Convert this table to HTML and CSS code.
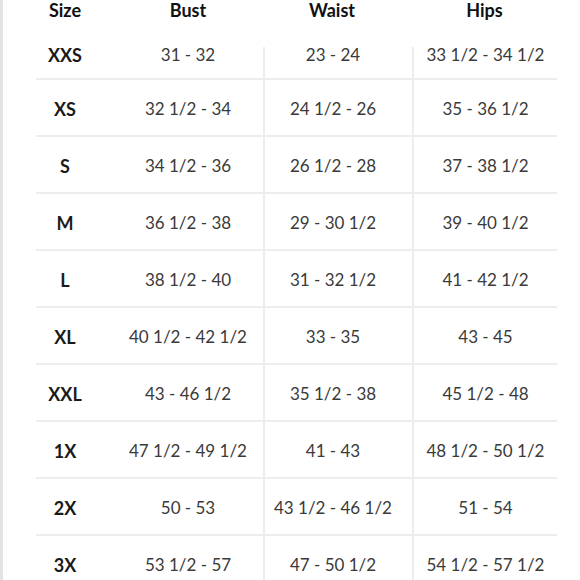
FILE: index.html
```html
<!DOCTYPE html>
<html lang="en">
<head>
<meta charset="utf-8">
<title>Size chart</title>
<link rel="stylesheet" href="styles.css">
</head>
<body>
<div class="chart">
  <div class="row head">
    <div class="cell c-size">Size</div>
    <div class="cell c-bust">Bust</div>
    <div class="cell c-waist">Waist</div>
    <div class="cell c-hips">Hips</div>
  </div>
  <div class="row data first">
    <div class="cell c-size">XXS</div>
    <div class="cell c-bust">31 - 32</div>
    <div class="cell c-waist">23 - 24</div>
    <div class="cell c-hips">33 1/2 - 34 1/2</div>
  </div>
  <div class="row data">
    <div class="cell c-size">XS</div>
    <div class="cell c-bust">32 1/2 - 34</div>
    <div class="cell c-waist">24 1/2 - 26</div>
    <div class="cell c-hips">35 - 36 1/2</div>
  </div>
  <div class="row data">
    <div class="cell c-size">S</div>
    <div class="cell c-bust">34 1/2 - 36</div>
    <div class="cell c-waist">26 1/2 - 28</div>
    <div class="cell c-hips">37 - 38 1/2</div>
  </div>
  <div class="row data">
    <div class="cell c-size">M</div>
    <div class="cell c-bust">36 1/2 - 38</div>
    <div class="cell c-waist">29 - 30 1/2</div>
    <div class="cell c-hips">39 - 40 1/2</div>
  </div>
  <div class="row data">
    <div class="cell c-size">L</div>
    <div class="cell c-bust">38 1/2 - 40</div>
    <div class="cell c-waist">31 - 32 1/2</div>
    <div class="cell c-hips">41 - 42 1/2</div>
  </div>
  <div class="row data">
    <div class="cell c-size">XL</div>
    <div class="cell c-bust">40 1/2 - 42 1/2</div>
    <div class="cell c-waist">33 - 35</div>
    <div class="cell c-hips">43 - 45</div>
  </div>
  <div class="row data">
    <div class="cell c-size">XXL</div>
    <div class="cell c-bust">43 - 46 1/2</div>
    <div class="cell c-waist">35 1/2 - 38</div>
    <div class="cell c-hips">45 1/2 - 48</div>
  </div>
  <div class="row data">
    <div class="cell c-size">1X</div>
    <div class="cell c-bust">47 1/2 - 49 1/2</div>
    <div class="cell c-waist">41 - 43</div>
    <div class="cell c-hips">48 1/2 - 50 1/2</div>
  </div>
  <div class="row data">
    <div class="cell c-size">2X</div>
    <div class="cell c-bust">50 - 53</div>
    <div class="cell c-waist">43 1/2 - 46 1/2</div>
    <div class="cell c-hips">51 - 54</div>
  </div>
  <div class="row data">
    <div class="cell c-size">3X</div>
    <div class="cell c-bust">53 1/2 - 57</div>
    <div class="cell c-waist">47 - 50 1/2</div>
    <div class="cell c-hips">54 1/2 - 57 1/2</div>
  </div>
</div>
</body>
</html>
```
FILE: styles.css
```css
html, body {
  margin: 0;
  padding: 0;
  background: #ffffff;
}
body {
  height: 580px;
  overflow: hidden;
  border-left: 3px solid #e3e3e3;
  box-sizing: border-box;
  font-family: Lato, "Liberation Sans", sans-serif;
}
.chart {
  margin-left: 33px;
  width: 521px;
}
.row {
  display: grid;
  grid-template-columns: 58px 169px 149px 145px;
}
.cell {
  display: flex;
  align-items: center;
  justify-content: center;
  white-space: nowrap;
}
.c-bust { padding-left: 19px; }
.c-waist { padding-right: 11px; }
.head {
  height: 23px;
}
.head .cell {
  font-size: 18px;
  font-weight: 700;
  color: #111111;
  line-height: 20px;
  align-items: flex-start;
}
.data {
  height: 57px;
  box-sizing: border-box;
  border-bottom: 2px solid #ededed;
}
.data .cell {
  font-size: 17px;
  color: #3a3a3a;
  padding-top: 2px;
}
.data.first .cell {
  padding-top: 8px;
}
.data .c-size {
  font-size: 18px;
  font-weight: 700;
  color: #1a1a1a;
}
.data .c-waist,
.data .c-hips {
  border-left: 2px solid #ededed;
}
.data.first .c-waist,
.data.first .c-hips {
  border-left: 0;
  background: linear-gradient(#ededed, #ededed) left 24px / 2px 100% no-repeat;
  padding-left: 2px;
}
```
